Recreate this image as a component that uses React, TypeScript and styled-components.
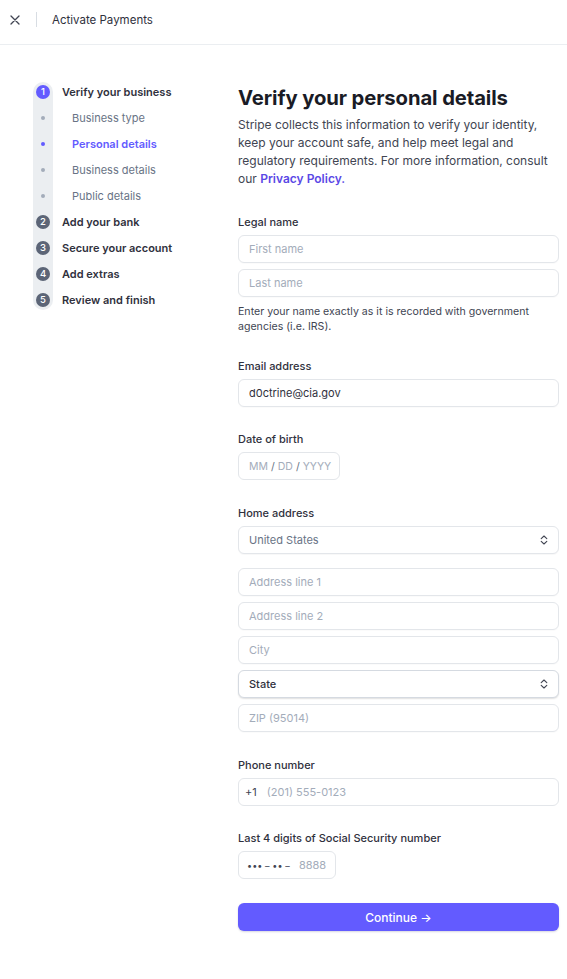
import React from "react";
import styled, { createGlobalStyle } from "styled-components";

const GlobalStyle = createGlobalStyle`
  html, body {
    margin: 0;
    padding: 0;
    background: #ffffff;
  }
  body {
    font-family: Inter, "Noto Sans", "Liberation Sans", sans-serif;
    color: #30313d;
    -webkit-font-smoothing: antialiased;
  }
  * { box-sizing: border-box; }
`;

const colors = {
  text: "#30313d",
  body: "#414552",
  muted: "#687385",
  placeholder: "#a3acba",
  border: "#e3e6ea",
  brand: "#635bff",
  link: "#5a48e6",
  track: "#ebeef1",
};

type StepItem = { label: string; kind: "step" | "sub"; num?: number; active?: boolean };

const steps: StepItem[] = [
  { label: "Verify your business", kind: "step", num: 1, active: true },
  { label: "Business type", kind: "sub" },
  { label: "Personal details", kind: "sub", active: true },
  { label: "Business details", kind: "sub" },
  { label: "Public details", kind: "sub" },
  { label: "Add your bank", kind: "step", num: 2 },
  { label: "Secure your account", kind: "step", num: 3 },
  { label: "Add extras", kind: "step", num: 4 },
  { label: "Review and finish", kind: "step", num: 5 },
];

const CloseIcon = () => (
  <svg width="10" height="10" viewBox="0 0 10 10" fill="none">
    <path d="M1 1l8 8M9 1l-8 8" stroke="#414552" strokeWidth="1.3" strokeLinecap="round" />
  </svg>
);

const Chevrons = () => (
  <svg width="8" height="10" viewBox="0 0 8 10" fill="none">
    <path
      d="M1.2 3.6L4 1l2.8 2.6M1.2 6.4L4 9l2.8-2.6"
      stroke="#414552"
      strokeWidth="1.1"
      strokeLinecap="round"
      strokeLinejoin="round"
    />
  </svg>
);

const App: React.FC = () => {
  return (
    <>
      <GlobalStyle />
      <Page>
        <Header>
          <CloseButton>
            <CloseIcon />
          </CloseButton>
          <HeaderDivider />
          <HeaderTitle>Activate Payments</HeaderTitle>
        </Header>
        <Body>
          <Sidebar>
            <Track>
              {steps.map((s) =>
                s.kind === "step" ? (
                  <StepCircle key={s.label} $active={s.active}>
                    {s.num}
                  </StepCircle>
                ) : (
                  <DotCell key={s.label}>
                    <Dot $active={s.active} />
                  </DotCell>
                )
              )}
            </Track>
            <Labels>
              {steps.map((s) => (
                <StepLabel key={s.label} $kind={s.kind} $active={s.active}>
                  {s.label}
                </StepLabel>
              ))}
            </Labels>
          </Sidebar>

          <Main>
            <Title>Verify your personal details</Title>
            <Intro>
              Stripe collects this information to verify your identity, keep your
              account safe, and help meet legal and regulatory requirements. For
              more information, consult our <Link>Privacy Policy.</Link>
            </Intro>

            <Form>
              <Field>
                <Label>Legal name</Label>
                <Stack>
                  <Input placeholder="First name" />
                  <Input placeholder="Last name" />
                </Stack>
                <Help>
                  Enter your name exactly as it is recorded with government
                  agencies (i.e. IRS).
                </Help>
              </Field>

              <Field>
                <Label>Email address</Label>
                <Input defaultValue="d0ctrine@cia.gov" />
              </Field>

              <Field>
                <Label>Date of birth</Label>
                <MaskBox $width={102} $gap={3} $size={10.5}>
                  <Faint>MM</Faint>
                  <Sep>/</Sep>
                  <Faint>DD</Faint>
                  <Sep>/</Sep>
                  <Faint>YYYY</Faint>
                </MaskBox>
              </Field>

              <Field $shift={1}>
                <Label>Home address</Label>
                <Stack>
                  <Select $spaced>
                    <SelectText $placeholder>United States</SelectText>
                    <Chevrons />
                  </Select>
                  <Input placeholder="Address line 1" />
                  <Input placeholder="Address line 2" />
                  <Input placeholder="City" />
                  <Select $raised>
                    <SelectText>State</SelectText>
                    <Chevrons />
                  </Select>
                  <Input placeholder="ZIP (95014)" />
                </Stack>
              </Field>

              <Field $shift={1}>
                <Label>Phone number</Label>
                <MaskBox>
                  <Prefix>+1</Prefix>
                  <Faint>(201) 555-0123</Faint>
                </MaskBox>
              </Field>

              <Field>
                <Label>Last 4 digits of Social Security number</Label>
                <MaskBox $width={98}>
                  <Bullets>••• – •• –</Bullets>
                  <Faint>8888</Faint>
                </MaskBox>
              </Field>

              <ContinueButton>Continue →</ContinueButton>
            </Form>
          </Main>
        </Body>
      </Page>
    </>
  );
};

const Page = styled.div`
  width: 567px;
  min-height: 979px;
  background: #fff;
`;

const Header = styled.header`
  height: 45px;
  display: flex;
  align-items: center;
  padding: 0 0 5px 10px;
  border-bottom: 1px solid #ebeef1;
`;

const CloseButton = styled.div`
  width: 10px;
  height: 10px;
  display: flex;
`;

const HeaderDivider = styled.div`
  width: 1px;
  height: 15px;
  background: #d8dde3;
  margin: 0 15px 0 16px;
`;

const HeaderTitle = styled.div`
  font-size: 11.5px;
  font-weight: 400;
  color: ${colors.text};
`;

const Body = styled.div`
  display: flex;
  padding: 39px 8px 40px 33px;
`;

const Sidebar = styled.nav`
  width: 205px;
  flex-shrink: 0;
  display: flex;
  align-items: flex-start;
  gap: 9px;
  margin-top: -2px;
`;

const Track = styled.div`
  display: flex;
  flex-direction: column;
  gap: 12px;
  padding: 3px;
  background: ${colors.track};
  border-radius: 10px;
`;

const StepCircle = styled.div<{ $active?: boolean }>`
  width: 14px;
  height: 14px;
  border-radius: 50%;
  background: ${({ $active }) => ($active ? colors.brand : "#5c6577")};
  color: #fff;
  font-size: 9.5px;
  font-weight: 500;
  display: flex;
  align-items: center;
  justify-content: center;
  line-height: 1;
`;

const DotCell = styled.div`
  width: 14px;
  height: 14px;
  display: flex;
  align-items: center;
  justify-content: center;
`;

const Dot = styled.span<{ $active?: boolean }>`
  width: 4px;
  height: 4px;
  border-radius: 50%;
  background: ${({ $active }) => ($active ? colors.brand : "#a3acba")};
`;

const Labels = styled.div`
  display: flex;
  flex-direction: column;
  gap: 12px;
  padding: 3px 0;
`;

const StepLabel = styled.div<{ $kind: "step" | "sub"; $active?: boolean }>`
  height: 14px;
  line-height: 14px;
  font-size: 11px;
  white-space: nowrap;
  padding-left: ${({ $kind }) => ($kind === "sub" ? "10px" : "0")};
  font-weight: ${({ $kind, $active }) => ($kind === "step" || $active ? 600 : 400)};
  color: ${({ $kind, $active }) =>
    $active && $kind === "sub" ? colors.brand : $kind === "sub" ? colors.muted : colors.text};
`;

const Main = styled.main`
  flex: 1;
  min-width: 0;
`;

const Title = styled.h1`
  margin: 0;
  font-size: 20.25px;
  line-height: 28px;
  font-weight: 700;
  color: #1a1b25;
  letter-spacing: -0.1px;
`;

const Intro = styled.p`
  margin: 4px 0 0;
  font-size: 12px;
  line-height: 18px;
  color: ${colors.body};
`;

const Link = styled.span`
  color: ${colors.link};
  font-weight: 600;
`;

const Form = styled.div`
  margin-top: 26px;
  display: flex;
  flex-direction: column;
  gap: 24px;
`;

const Field = styled.div<{ $shift?: number }>`
  display: flex;
  flex-direction: column;
  align-items: stretch;
  margin-top: ${({ $shift }) => $shift ?? 0}px;
`;

const Label = styled.div`
  font-size: 11px;
  line-height: 16px;
  font-weight: 500;
  color: ${colors.text};
  margin-bottom: 5px;
`;

const Stack = styled.div`
  display: flex;
  flex-direction: column;
  gap: 6px;
`;

const Input = styled.input`
  height: 28px;
  width: 100%;
  padding: 0 10px;
  border: 1px solid ${colors.border};
  border-radius: 6px;
  font-family: inherit;
  font-size: 11px;
  color: ${colors.text};
  background: #fff;
  box-shadow: 0 1px 1px rgba(0, 0, 0, 0.02);
  outline: none;

  &::placeholder {
    color: ${colors.placeholder};
  }
`;

const Help = styled.div`
  margin-top: 7px;
  font-size: 10.6px;
  line-height: 15px;
  color: ${colors.body};
`;

const MaskBox = styled.div<{ $width?: number; $gap?: number; $size?: number }>`
  height: 28px;
  width: ${({ $width }) => ($width ? `${$width}px` : "100%")};
  display: flex;
  align-items: center;
  gap: ${({ $gap }) => $gap ?? 4}px;
  padding: 0 10px;
  border: 1px solid ${colors.border};
  border-radius: 6px;
  font-size: ${({ $size }) => $size ?? 11}px;
  white-space: nowrap;
  background: #fff;
`;

const Faint = styled.span`
  color: ${colors.placeholder};
`;

const Sep = styled.span`
  color: ${colors.muted};
`;

const Prefix = styled.span`
  color: ${colors.body};
  margin-right: 6px;
  margin-left: -4px;
`;

const Bullets = styled.span`
  color: ${colors.body};
  font-size: 9px;
  margin-left: -2px;
  margin-right: 5px;
  letter-spacing: 0.1px;
`;

const Select = styled.div<{ $raised?: boolean; $spaced?: boolean }>`
  height: 28px;
  flex-shrink: 0;
  display: flex;
  align-items: center;
  justify-content: space-between;
  padding: 0 10px;
  margin-bottom: ${({ $spaced }) => ($spaced ? "8px" : "0")};
  border: 1px solid ${({ $raised }) => ($raised ? "#d5dae1" : colors.border)};
  border-radius: 6px;
  background: #fff;
  box-shadow: ${({ $raised }) =>
    $raised ? "0 1px 1.5px rgba(0, 0, 0, 0.12)" : "0 1px 1px rgba(0, 0, 0, 0.03)"};
`;

const SelectText = styled.span<{ $placeholder?: boolean }>`
  font-size: 11px;
  font-weight: ${({ $placeholder }) => ($placeholder ? 400 : 500)};
  color: ${({ $placeholder }) => ($placeholder ? colors.muted : colors.text)};
`;

const ContinueButton = styled.button`
  height: 28px;
  width: 100%;
  border: none;
  border-radius: 6px;
  background: ${colors.brand};
  color: #fff;
  font-family: inherit;
  font-size: 12px;
  font-weight: 500;
  box-shadow: 0 1px 2px rgba(50, 50, 93, 0.2);
  cursor: pointer;
`;

export default App;
